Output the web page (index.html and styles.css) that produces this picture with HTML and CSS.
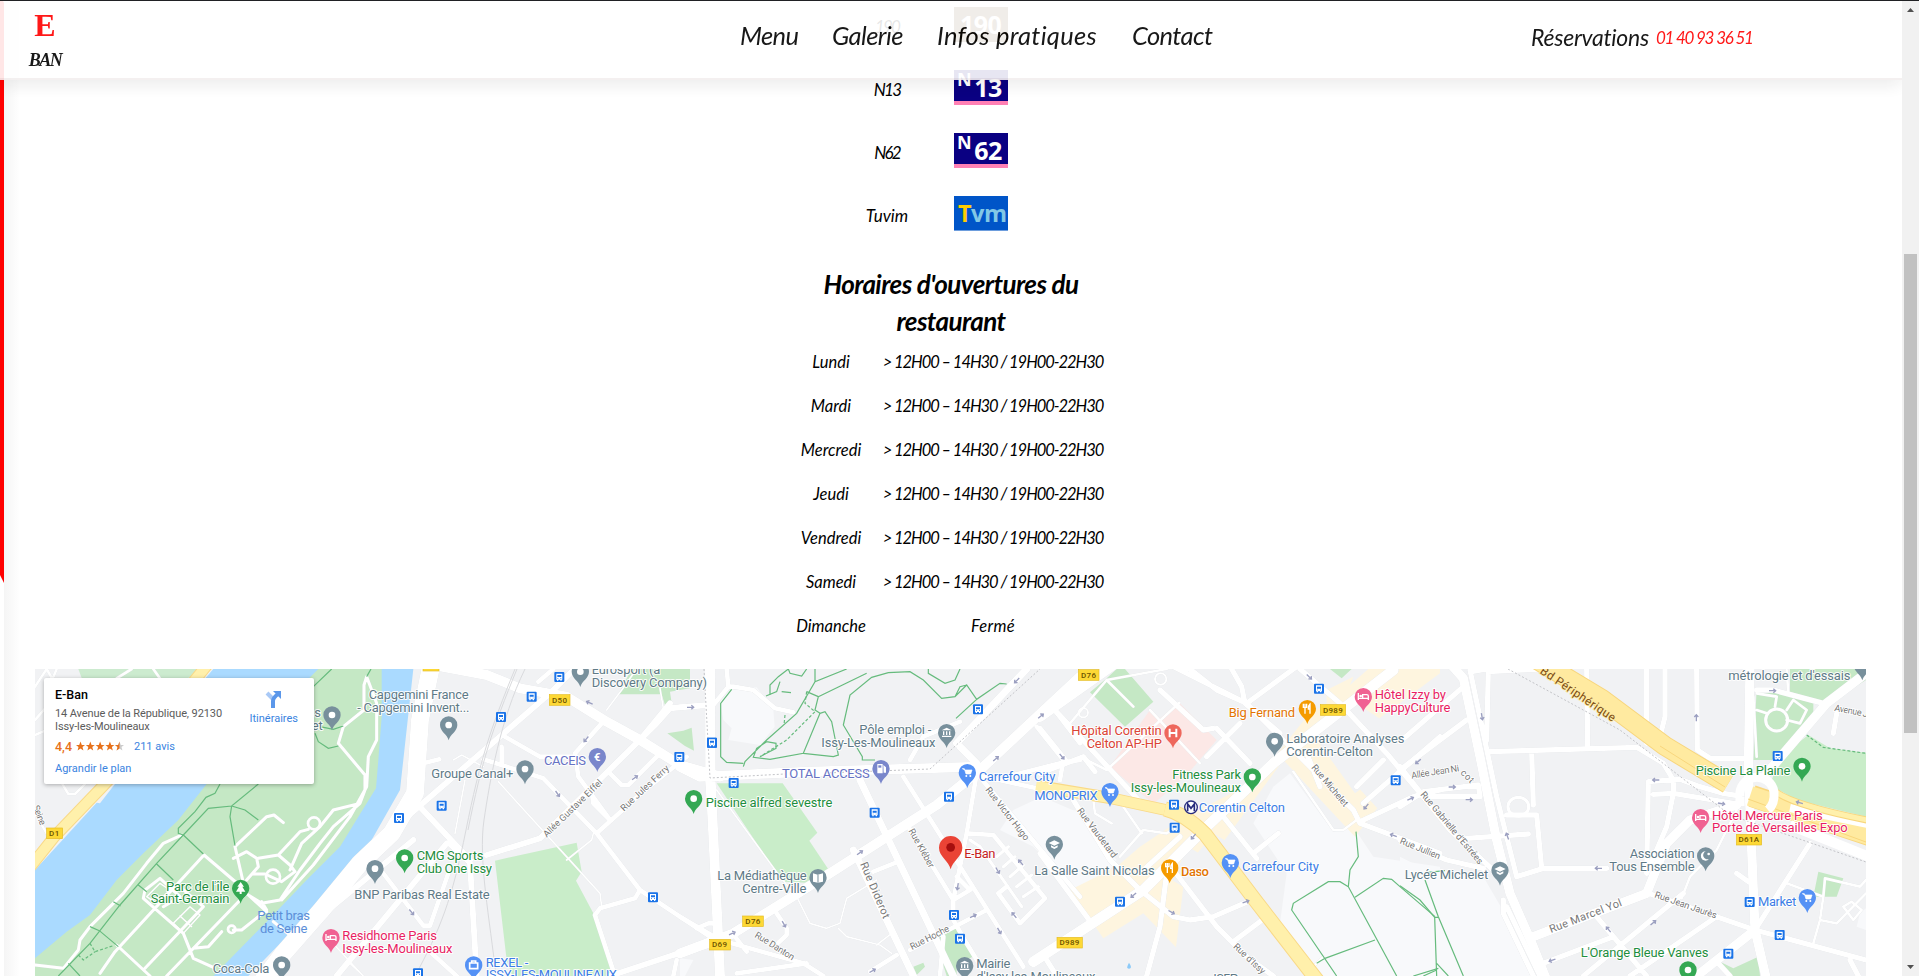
FILE: index.html
```html
<!DOCTYPE html>
<html lang="fr">
<head>
<meta charset="utf-8">
<title>E-Ban - Infos pratiques</title>
<link rel="stylesheet" href="styles.css">
</head>
<body>
<div class="screen">
  <div class="ribbon"></div>
  <main class="content">
    <section class="lines">
      <span>190</span><b class="badge day">190</b>
      <span>N13</span><b class="badge night"><sup>N</sup>13</b>
      <span>N62</span><b class="badge night"><sup>N</sup>62</b>
      <span class="wide">Tuvim</span><b class="badge tvm"><i>T</i>vm</b>
    </section>
    <h2 class="title">Horaires d'ouvertures du<br>restaurant</h2>
    <section class="hours">
      <span>Lundi</span><span>&gt; 12H00 – 14H30 / 19H00-22H30</span>
      <span>Mardi</span><span>&gt; 12H00 – 14H30 / 19H00-22H30</span>
      <span>Mercredi</span><span>&gt; 12H00 – 14H30 / 19H00-22H30</span>
      <span>Jeudi</span><span>&gt; 12H00 – 14H30 / 19H00-22H30</span>
      <span>Vendredi</span><span>&gt; 12H00 – 14H30 / 19H00-22H30</span>
      <span>Samedi</span><span>&gt; 12H00 – 14H30 / 19H00-22H30</span>
      <span>Dimanche</span><span class="closed">Fermé</span>
    </section>
    <section class="map">
      <svg class="plan" viewBox="35 669 1831 307" width="1831" height="307">
        <defs>
          <path id="pin" d="M0 46C-4 28-26 20-26 0A26 26 0 0 1 26 0C26 20 4 28 0 46Z"/>
          <g id="dot"><use href="#pin"/><circle r="10" fill="#fff"/></g>
          <g id="bed"><use href="#pin"/><path d="M-15-11V10M-15 5H15V10M15 5V-2Q15-6 10-6H-2V3" fill="none" stroke="#fff" stroke-width="4"/><circle cx="-8" cy="-2" r="4" fill="#fff"/></g>
          <g id="cart"><use href="#pin"/><path d="M-15-12H-9L-4 4H10L14-8H-7Z" fill="#fff" stroke="#fff" stroke-width="2"/><circle cx="-3" cy="10" r="3" fill="#fff"/><circle cx="9" cy="10" r="3" fill="#fff"/></g>
          <g id="fork"><use href="#pin"/><path d="M-7-15V15M-12-15V-4H-2V-15M8 15V-14Q3-10 3 1H8" fill="none" stroke="#fff" stroke-width="4"/></g>
          <g id="school"><use href="#pin"/><path d="M-17-4L0-12L17-4L0 4ZM-10 3L0 8L10 3V9L0 14L-10 9Z" fill="#fff"/></g>
          <g id="civic"><use href="#pin"/><path d="M-15-7L0-15L15-7ZM-14 9H14V13H-14ZM-11-4H-7V7H-11ZM-2-4H2V7H-2ZM7-4H11V7H7Z" fill="#fff"/></g>
          <g id="bus"><rect x="-15" y="-15" width="30" height="30" rx="3" fill="#1a73e8"/><path d="M-9-10H9V8H7V11H3V8H-3V11H-7V8H-9Z" fill="#fff"/><path d="M-6-6H6V0H-6ZM-6 3H-3V5H-6ZM3 3H6V5H3Z" fill="#1a73e8"/></g>
          <path id="arr" d="M-11 0H8M2-6L9 0L2 6" fill="none" stroke="#9b9fc0" stroke-width="4"/>
        </defs>
        <rect x="35" y="669" width="1831" height="307" fill="#f1f2f4"/>

        <!-- Water, parks and built-up areas -->
        <g transform="translate(0 560) scale(.33333)">
          <path fill="#ccebcf" d="M235 327H600L480 420H270Z"/>
          <path fill="#aadaff" d="M640 327H1240L1200 690L1115 840L1020 960L880 1110L745 1248H105V930L160 870L290 728L300 730L345 672Z"/>
          <path fill="#c5e8c5" d="M955 327H1145V470L1135 600L1128 685L1075 770L1020 860L920 960L800 1085L640 1248H105V1195L200 1115L270 1065L350 960L430 880L535 780L620 672L720 560Z"/>
        </g>
        <g transform="translate(320 660) scale(.33333)">
          <path fill="#c9edc9" d="M525 602L770 548L785 635L768 662L820 760L830 800L872 920L885 948H577L560 900Z"/>
          <path fill="#c5e8c5" d="M935 27H1110V85L1050 95L1055 130L1035 135L1025 103H895ZM1042 220L1090 212L1115 203L1122 272L1095 258Z"/>
        </g>
        <g transform="translate(680 660) scale(.33333)">
          <path fill="#f8f9fb" d="M150 90L230 82L280 150L284 200L240 255L145 240L155 205L130 180L120 125ZM1000 450L1085 410L1200 460V700L1060 560L960 510ZM0 895L40 900L15 948H0Z"/>
          <path fill="#c9edc9" d="M110 370H308L412 518L388 542L445 628L380 668L310 665L290 640Z"/>
          <path fill="#c5e8c5" d="M765 835L825 800L845 820L878 890L830 915L830 948H800ZM700 920L730 908L735 920L710 945Z"/>
        </g>
        <g transform="translate(1040 660) scale(.33333)">
          <path fill="#f8f9fb" d="M700 380L750 340L880 515L940 500L1000 590L1200 620V948H850L720 790L740 640L640 490ZM0 470L110 450L230 600L150 720L0 560Z"/>
          <path fill="#fce8e6" d="M210 320L330 150L360 175L418 128L530 240L440 345L340 432Z"/>
          <path fill="#c5e8c5" d="M200 55L230 27H255L340 125L255 200L150 97ZM870 27H935L905 55Z"/>
          <path fill="#fef5df" d="M930 75L985 27H1200V40L930 240L870 290L1012 445L945 530L730 300L510 600L445 560L395 660L430 680L408 862L310 760L190 835L90 690L230 620L300 560L420 480L650 360L800 170L860 130V90L940 50Z"/>
          <path fill="#f1f2f4" d="M820 225L950 130L1100 230L1040 330L945 400ZM440 620L520 520L650 600L540 620Z"/>
          <path fill="#8ccaf8" d="M267 908q-7 13-5 16q5 5 10 0q3-4-5-16"/>
        </g>
        <g transform="translate(1400 660) scale(.33333)">
          <path fill="#f8f9fb" d="M0 590L60 620L250 650L320 770L400 948H0Z"/>
          <path fill="#c5e8c5" d="M1170 27H1398V60L1280 135L1170 95ZM1070 85L1240 125V170L1130 300H1060Z"/>
          <path fill="#c9edc9" d="M1225 225L1290 265L1398 278V470L1190 420L1110 375L1140 290Z"/>
          <path fill="#c5e8c5" d="M1255 635L1330 655L1310 710H1240ZM960 905L1000 925L1075 890L1080 948H985Z"/>
          <path fill="#f8f9fb" d="M1380 760L1398 745V810L1370 800Z"/>
        </g>

        <!-- Streets -->
        <g class="roads">
          <g transform="translate(0 560) scale(.33333)">
            <path stroke-width="8" d="M105 380L140 327L215 460M105 480L175 400M105 525L140 510M170 327L140 400L260 500M350 355L395 327M460 327L490 370M180 660L205 702H225L255 672M105 760L140 820"/>
            <path stroke-width="9" d="M105 1215L190 1225L235 1170L240 1140L270 1100L370 1000L440 910L490 850L545 825M300 1240L345 1175L612 885L735 990M430 1015L550 1120L580 1195L640 1222M430 1015L435 990L480 955L540 1010L490 1040M705 860L800 770L822 765L850 788M705 860L735 990M580 1165L625 1160L665 1115M350 1155L450 1248M500 1248L740 1000M435 1225L610 1040L545 985M700 895L740 875L770 895L775 920L740 960M775 895L835 885L870 915L885 935L845 965L795 942H760M745 1005L800 1055M745 1005L785 1030L840 1020L900 930L960 850L1000 800L1080 730M835 885L900 815L925 808M1100 350L1092 375V450L1030 500L1015 550L1095 645V690L1080 730L1000 750L960 800L905 850L870 930M1100 350L1130 430V540L1105 590L1100 680L1050 770L940 915L845 1020M700 1110H725L800 1050L785 1025M820 1085L900 1150"/>
            <path stroke-width="8" d="M840 950a21 21 0 1 0-42 0a21 21 0 1 0 42 0M960 790a18 18 0 1 0-36 0a18 18 0 1 0 36 0"/>
            <circle cx="695" cy="1108" r="11" stroke-width="8"/>
            <path stroke-width="4" d="M520 1090L570 1040L600 1065L550 1120ZM540 1068L575 1100M440 1010L480 970L510 990L470 1030Z"/>
          </g>
          <g transform="translate(320 660) scale(.33333)">
            <path stroke-width="54" d="M335 10L300 180L285 400L215 520L120 610L0 755L-110 880L-200 1000"/>
            <path stroke-width="30" d="M340 15L500 45L600 85L740 110L860 185L960 240L1080 315L1200 350"/>
            <path stroke-width="18" d="M1165 0V370L1195 760M250 480L690 100L760 30M285 425L450 600M50 948L380 550M450 610L470 948M500 585L660 535L1010 190L1050 145L1165 135M870 948L1060 885L1200 845M280 540L0 770M960 240L1050 130"/>
            <path stroke-width="14" d="M555 230L660 290H770M845 190L765 280L775 350L870 480M545 310L545 260M490 298L670 355L830 520L960 690L1200 850M870 340L905 375H925L1015 285M815 395L820 430L870 480M830 520L975 390L1100 290M310 310L358 298M190 640L310 797H330L385 640M960 690L945 715L840 745L825 765L885 948M450 610L385 550M335 880L410 948M655 65L700 27M1200 790H1165L1130 805M1060 948L1070 900"/>
            <path stroke-width="5" d="M535 365L840 700L845 740M435 360L405 520M400 300L425 285L490 320M740 600L815 540L820 520M860 150L905 90L950 27M1030 145L1020 85M20 830L130 948M90 910L130 948"/>
          </g>
          <g transform="translate(680 660) scale(.33333)">
            <path stroke-width="30" d="M90 0L92 360L120 948M0 320L60 350L380 335L890 320M0 880L160 820L450 640L770 435L900 330L1200 50"/>
            <path stroke-width="22" d="M890 310L840 260M520 570L700 948M540 360L820 948M830 250L1040 27"/>
            <path stroke-width="14" d="M670 350L1030 920M890 340L860 520L820 720V780L860 850L920 948M890 340L1200 710M685 500L820 720L870 690L830 650M1070 200L1150 300L1140 360M1120 145L1200 250M690 870L920 750M580 635L655 605M290 760L320 805V825L295 848M165 830L200 875M0 770L120 840L370 910L430 948M860 520L940 525L1095 715L1020 790L955 700L980 680M890 345L1070 385L1200 410M0 140L100 135L145 80H160L220 90L285 145L340 157M145 80L140 27M690 300L730 230L840 185M170 940L380 910M570 935L650 885M790 830L780 948M1200 300L1140 310L1000 345"/>
            <path stroke-width="10" d="M870 540L900 560L1025 740M950 590L985 560M970 620L1005 590M990 650L1030 615M1010 680L1055 645M1030 710L1075 680"/>
            <path stroke-width="5" d="M110 390L300 650L350 710L390 790L440 805L480 790L500 715L590 660M475 805L500 830L600 855L635 880M590 855L635 820"/>
          </g>
          <g transform="translate(1040 660) scale(.33333)">
            <path stroke-width="32" d="M0 170L240 0M-20 905L310 690L490 510L700 310L1060 30"/>
            <path stroke-width="16" d="M40 145L300 425M0 205L80 305M0 340L130 290L165 335M400 20L620 130L940 450L960 490L1200 580M575 27L605 80L615 130L720 220M450 27L530 90L620 130M620 130L770 20M780 27L900 130L1040 280L1200 470M960 485L1120 410L1200 390M970 430L1200 230M840 380L800 280M950 380L1030 300M0 580L155 790M100 420L210 600L300 690L400 770L450 780L520 770L635 720M380 640L360 800L320 948M400 630L530 800L620 890L700 948M430 30L530 -20M530 205L630 310M500 290L600 190M550 470L650 595M640 580L715 520M580 845L680 770M520 205L490 210L360 90M420 530L300 640M20 900L50 948"/>
            <path stroke-width="8" d="M90 190L200 60L380 27M200 60L280 140M160 420L165 460L215 490M330 150L480 310M240 590L310 510L380 520L410 500M250 440L305 520M140 300L200 330L418 128M760 335L880 510L910 510L950 480M800 940L850 890"/>
            <circle cx="362" cy="57" r="17" fill="none" stroke-width="6"/><circle cx="130" cy="158" r="14" fill="none" stroke-width="6"/>
          </g>
          <g transform="translate(1400 660) scale(.33333)">
            <path stroke-width="28" d="M150 10L190 55L240 290L290 540L330 700L400 860L440 960M1050 20L1045 330L1065 810L1100 960M1100 340L1280 130L1398 40M1065 810L900 940M400 830L740 700L800 550L870 480L1010 435"/>
            <path stroke-width="16" d="M210 30L290 410L350 650L430 625H620M215 35L300 20M265 30L260 240M265 35L420 27M270 275L710 262L790 310L820 360V400L800 500L740 640L745 365L840 358L900 380L970 400L1020 408M560 20L563 260M740 20V250M795 20V170L780 230M890 20L892 270L930 295H1045M395 275L400 435M320 465H410L425 625M200 535L385 522M0 330L200 180M0 440L70 395L235 375L240 410H70M0 245L190 80M0 320L150 510L290 640M0 540L140 600L250 625M760 403L820 400L1000 430M1065 810L745 700M1065 810L1230 550M1065 810L1398 900M1070 90H1120L1270 130M1010 640L1045 665M1350 900L1375 948M590 770L740 948M430 910L640 830M550 948L850 700M690 948L950 770M950 905L990 948M310 720V760L400 948M320 740L420 948M1300 220L1310 160"/>
            <ellipse cx="355" cy="440" rx="31" ry="28" fill="none" stroke-width="10"/>
            <circle cx="1130" cy="180" r="33" fill="none" stroke-width="9"/>
            <path stroke-width="8" d="M1070 100L1130 110L1125 140M1070 150L1100 160M1160 150L1180 120L1220 150L1200 190L1160 180M1160 30L1165 100M1060 110L1070 290M845 715L870 650L950 570L1010 450M1160 670L1270 710L1275 655L1380 680L1398 660M1270 710L1260 780L1240 850M1260 780L1310 790L1398 700M1330 740L1355 725L1385 750L1360 780Z"/>
          </g>
        </g>

        <!-- Railway and municipal limits -->
        <g fill="none" stroke="#d9dadd" stroke-width="1">
          <path d="M515 669C490 730 480 760 466 830S440 930 415 976M525 669C500 720 490 780 484 820S490 920 496 976M517 669C492 730 482 760 468 830"/>
          <path d="M704 669L710 778L785 774M826 773L930 769L1040 669M1508 669L1620 730L1730 815L1866 862" stroke="#c3c4c8" stroke-dasharray="2 2"/>
        </g>

        <!-- Yellow trunk roads -->
        <g fill="none" stroke-linejoin="round">
          <path stroke="#f9d987" stroke-width="12" d="M27 871L55 836L103 786L150 735L208 664"/>
          <path stroke="#fff0ab" stroke-width="10" d="M27 871L55 836L103 786L150 735L208 664"/>
          <path stroke="#f9d987" stroke-width="12" d="M1038 786L1110 798L1175 812"/>
          <path stroke="#fff0ab" stroke-width="10" d="M1036 786L1110 798L1175 812"/>
          <path stroke="#f9d987" stroke-width="15" d="M1165 809Q1185 814 1205 834L1255 900L1320 984"/>
          <path stroke="#fff0ab" stroke-width="13" d="M1165 809Q1185 814 1205 834L1255 900L1320 984"/>
          <path stroke="#f8d67d" stroke-width="20" d="M1534 658L1602 699L1665 746L1728 784"/>
          <path stroke="#ffeaa0" stroke-width="18" d="M1534 658L1602 699L1665 746L1728 784"/>
          <path stroke="#fff" stroke-width="8" d="M1800 810L1872 836"/>
          <path stroke="#f8d67d" stroke-width="22" d="M1752 796L1872 836"/>
          <path stroke="#ffeaa0" stroke-width="20" d="M1750 796L1872 836"/>
          <path stroke="#fff" stroke-width="8" d="M1790 808L1872 825"/>
          <path stroke="#f8d67d" stroke-width="7" d="M1776 792Q1795 806 1872 821"/>
          <path stroke="#fff0ab" stroke-width="5" d="M1776 792Q1795 806 1872 821"/>
          <path stroke="#fff" stroke-width="10" d="M1790 825L1872 858"/>
          <path stroke="#f8d67d" d="M1660 746L1725 787M1748 799L1866 842"/>
          <path stroke="#fff" stroke-width="9" d="M1740 797A17 17 0 0 1 1774 792Q1775 804 1768 810M1740 797V806"/>
        </g>

        <!-- Footpaths -->
        <g class="paths">
          <g transform="translate(0 560) scale(.33333)"><path d="M660 672L645 700L618 712L585 755L535 805V820L550 825L470 910L360 1035L270 1150L175 1248M550 825L625 745L695 738L775 672M550 825L610 882M695 738L690 770L705 857M695 738L735 750L775 780M470 912L520 960M415 975L440 995M340 1025L362 1038M270 1100L298 1112L355 1160M205 1210L240 1248M940 380L995 327M1113 327L1100 350M945 520L955 545L985 565L1015 558M960 500L1000 508L1030 498"/><path stroke-dasharray="9 6" d="M270 1150L285 1175L340 1157M235 1185L250 1200L285 1175"/></g>
          <g transform="translate(680 660) scale(.33333)"><path d="M155 88L122 130V290L140 307L190 310M190 320L195 305L260 240L350 160L405 65L500 27M270 105V75L295 50L325 27M405 65V27M325 27L330 40L365 48L380 27M258 108L290 95L300 65M415 110L560 40M415 110L380 95M415 110L405 150L420 160L370 280L270 298L220 292L230 265L260 245L288 250V265L240 290M370 280L460 290L475 285L455 185L435 155L420 160M585 300H547V290L490 195L510 105L575 52L625 38L690 35L730 60L785 115L825 110L860 75L890 118L960 70L980 72M745 27V40L795 70L825 60L840 27M860 75L840 80L825 110M890 118L828 175M305 95L333 98"/><path stroke-dasharray="9 6" d="M380 95L375 130L405 155L320 240L240 290M315 165L312 195"/></g>
          <g transform="translate(1040 660) scale(.33333)"><path d="M948 515L955 590L930 630L925 680L1070 948M925 680L900 665H865L760 730L755 750L890 948M945 712L1030 655L1055 658L1080 680L1185 770M830 910L855 895L1005 840M1120 948L1195 925"/></g>
          <g transform="translate(1400 660) scale(.33333)"><path d="M0 677L60 720L104 772L110 948M75 660L115 770L190 948M75 638L135 632M104 772H115M70 948L110 930M110 910L145 948"/><path stroke-dasharray="9 6" d="M1220 225L1270 262L1398 280"/></g>
        </g>

        <!-- One-way arrows -->
        <g>
          <g transform="translate(320 660) scale(.33333)"><use href="#arr" transform="translate(808 128) rotate(205)"/><use href="#arr" x="1112" y="142"/><use href="#arr" transform="translate(798 238) rotate(130)"/><use href="#arr" transform="translate(945 353) rotate(-35)"/><use href="#arr" transform="translate(713 402) rotate(55)"/><use href="#arr" transform="translate(275 757) rotate(50)"/></g>
          <g transform="translate(680 660) scale(.33333)"><use href="#arr" transform="translate(1010 62) rotate(135)"/><use href="#arr" transform="translate(1083 168) rotate(-40)"/><use href="#arr" transform="translate(948 296) rotate(-40)"/><use href="#arr" transform="translate(1146 290) rotate(50)"/><use href="#arr" transform="translate(540 578) rotate(-35)"/><use href="#arr" transform="translate(1022 607) rotate(230)"/><use href="#arr" transform="translate(953 632) rotate(60)"/><use href="#arr" transform="translate(833 680) rotate(100)"/><use href="#arr" transform="translate(880 768) rotate(-25)"/><use href="#arr" transform="translate(1002 765) rotate(230)"/><use href="#arr" transform="translate(958 813) rotate(60)"/><use href="#arr" transform="translate(312 793) rotate(60)"/><use href="#arr" transform="translate(157 820) rotate(-25)"/><use href="#arr" transform="translate(578 932) rotate(-30)"/></g>
          <g transform="translate(1040 660) scale(.33333)"><use href="#arr" transform="translate(808 51) rotate(45)"/><use href="#arr" transform="translate(1134 305) rotate(140)"/><use href="#arr" transform="translate(1112 416) rotate(-25)"/><use href="#arr" transform="translate(978 440) rotate(130)"/><use href="#arr" transform="translate(1060 526) rotate(200)"/><use href="#arr" transform="translate(460 530) rotate(130)"/><use href="#arr" transform="translate(280 706) rotate(140)"/><use href="#arr" transform="translate(395 757) rotate(30)"/><use href="#arr" transform="translate(618 725) rotate(-20)"/></g>
          <g transform="translate(1400 660) scale(.33333)"><use href="#arr" x="1118" y="92"/><use href="#arr" transform="translate(246 170) rotate(80)"/><use href="#arr" transform="translate(889 173) rotate(-90)"/><use href="#arr" transform="translate(767 360) rotate(180)"/><use href="#arr" x="157" y="381"/><use href="#arr" x="208" y="419"/><use href="#arr" transform="translate(965 431) rotate(10)"/><use href="#arr" transform="translate(1198 428) rotate(195)"/><use href="#arr" transform="translate(322 528) rotate(-110)"/><use href="#arr" transform="translate(595 625) rotate(180)"/><use href="#arr" transform="translate(760 788) rotate(-40)"/><use href="#arr" transform="translate(625 808) rotate(230)"/><use href="#arr" transform="translate(456 901) rotate(160)"/></g>
        </g>

        <!-- Street names -->
        <g class="street">
          <g transform="translate(0 560) scale(.33333)"><text transform="translate(98 740) rotate(68)" textLength="62">Seine</text></g>
          <g transform="translate(320 660) scale(.33333)"><text transform="translate(680 533) rotate(-44)" textLength="235">Allée Gustave Eiffel</text><text transform="translate(912 455) rotate(-43)" textLength="188">Rue Jules Ferry</text></g>
          <g transform="translate(680 660) scale(.33333)"><text transform="translate(915 390) rotate(52)" textLength="195">Rue Victor Hugo</text><text transform="translate(685 512) rotate(61)" textLength="130">Rue Kléber</text><text class="lg" transform="translate(540 612) rotate(67)" textLength="180">Rue Diderot</text><text transform="translate(222 830) rotate(32)" textLength="135">Rue Danton</text><text transform="translate(696 870) rotate(-27)" textLength="128">Rue Hoche</text></g>
          <g transform="translate(1040 660) scale(.33333)"><text transform="translate(110 452) rotate(53)" textLength="180">Rue Vaudetard</text><text transform="translate(813 323) rotate(50)" textLength="155">Rue Michelet</text><text transform="translate(578 862) rotate(43)" textLength="120">Rue d'Issy</text></g>
          <g transform="translate(1400 660) scale(.33333)"><text transform="translate(35 356) rotate(-9)" textLength="145">Allée Jean Ni</text><text transform="translate(180 340) rotate(45)" textLength="44">cot</text><text transform="translate(60 404) rotate(50)" textLength="275">Rue Gabrielle d'Estrées</text><text transform="translate(-2 550) rotate(22)" textLength="128">Rue Jullien</text><text class="lg" transform="translate(453 819) rotate(-21)" textLength="230">Rue Marcel Yol</text><text transform="translate(762 712) rotate(19)" textLength="195">Rue Jean Jaurès</text><text transform="translate(1302 152) rotate(11)" textLength="102">Avenue J</text><text class="ring" transform="translate(418 38) rotate(34)" textLength="264">Bd Périphérique</text></g>
        </g>

        <!-- Road numbers -->
        <g class="shields">
          <g transform="translate(0 560) scale(.33333)"><rect x="140" y="804" width="48" height="32"/><text x="163" y="828">D1</text></g>
          <g transform="translate(320 660) scale(.33333)"><rect x="309" y="1" width="48" height="32"/><rect x="688" y="104" width="62" height="32"/><text x="719" y="128">D50</text></g>
          <g transform="translate(680 660) scale(.33333)"><rect x="188" y="768" width="62" height="32"/><text x="219" y="792">D76</text><rect x="89" y="838" width="62" height="32"/><text x="119" y="862">D69</text></g>
          <g transform="translate(1040 660) scale(.33333)"><rect x="115" y="29" width="62" height="32"/><text x="146" y="53">D76</text><rect x="841" y="134" width="76" height="32"/><text x="879" y="158">D989</text><rect x="51" y="832" width="76" height="32"/><text x="89" y="856">D989</text></g>
          <g transform="translate(1400 660) scale(.33333)"><rect x="1009" y="523" width="76" height="32"/><text x="1047" y="547">D61A</text></g>
        </g>

        <!-- Places -->
        <g class="places">
          <g transform="translate(0 560) scale(.33333)">
            <g class="water"><text x="772" y="1081" textLength="158">Petit bras</text><text x="780" y="1120" textLength="142">de Seine</text></g>
            <g class="grey"><use href="#dot" x="996" y="465"/><use href="#dot" x="1125" y="926"/><use href="#dot" x="845" y="1215"/><text x="943" y="472">s</text><text x="935" y="511">et</text><text x="638" y="1240" textLength="170">Coca-Cola</text></g>
            <g class="green"><text x="498" y="992" textLength="190">Parc de l'île</text><text x="452" y="1030" textLength="236">Saint-Germain</text><use href="#pin" x="722" y="985"/></g>
            <path fill="#fff" d="M722 966L732 980H727L736 995H725V1002H719V995H708L717 980H712Z"/>
          </g>
          <g transform="translate(320 660) scale(.33333)">
            <g class="grey"><text x="146" y="117" textLength="300">Capgemini France</text><text x="112" y="156" textLength="336">- Capgemini Invent...</text><use href="#dot" x="386" y="195"/><text x="334" y="353" textLength="246">Groupe Canal+</text><use href="#dot" x="615" y="327"/><text x="103" y="717" textLength="406">BNP Paribas Real Estate</text><text x="815" y="42" textLength="206">Eurosport (a</text><text x="815" y="80" textLength="346">Discovery Company)</text><use href="#dot" x="781" y="35"/></g>
            <g class="violet"><text x="672" y="315" textLength="126">CACEIS</text><use href="#pin" x="832" y="290"/></g><text x="822" y="303" fill="#fff" class="glyph">€</text>
            <g class="green"><use href="#dot" x="254" y="594"/><text x="290" y="600" textLength="200">CMG Sports</text><text x="290" y="639" textLength="226">Club One Issy</text><use href="#dot" x="1121" y="416"/><text x="1157" y="441" textLength="380">Piscine alfred sevestre</text></g>
            <g class="pink"><use href="#bed" x="33" y="833"/><text x="67" y="840" textLength="284">Residhome Paris</text><text x="67" y="878" textLength="330">Issy-les-Moulineaux</text></g>
            <g class="blue"><use href="#pin" x="461" y="915"/><text x="497" y="921" textLength="128">REXEL -</text><text x="497" y="958" textLength="394">ISSY-LES-MOULINEAUX</text></g>
            <path d="M449 909H473V926H449ZM455 909V903H467V909" fill="none" stroke="#fff" stroke-width="5"/>
            <use href="#bus" x="718" y="51"/><use href="#bus" x="635" y="110"/><use href="#bus" x="543" y="171"/><use href="#bus" x="365" y="437"/><use href="#bus" x="237" y="474"/><use href="#bus" x="1176" y="248"/><use href="#bus" x="1078" y="291"/><use href="#bus" x="999" y="712"/><use href="#bus" x="294" y="940"/>
          </g>
          <g transform="translate(680 660) scale(.33333)">
            <g class="grey"><text x="538" y="223" textLength="216">Pôle emploi -</text><text x="424" y="261" textLength="342">Issy-Les-Moulineaux</text><use href="#civic" x="800" y="218"/><text x="112" y="660" textLength="268">La Médiathèque</text><text x="187" y="698" textLength="192">Centre-Ville</text><use href="#pin" x="414" y="653"/><use href="#school" x="1123" y="553"/><text x="1063" y="644" textLength="361">La Salle Saint Nicolas</text><use href="#civic" x="854" y="917"/><text x="889" y="924" textLength="102">Mairie</text><text x="889" y="962" textLength="357">d'Issy-les-Moulineaux</text></g>
            <path fill="#fff" d="M399 640L413 644L429 640V665L414 668L399 665Z"/><path stroke="#78909c" stroke-width="3" d="M414 644V668"/>
            <g class="violet"><text x="306" y="353" textLength="263">TOTAL ACCESS</text><use href="#pin" x="603" y="326"/></g><path fill="#fff" d="M592 312H608V340H592ZM610 315L618 322V338H611Z"/><path fill="#7986cb" d="M595 316H604V323H595Z"/>
            <g class="blue"><use href="#cart" x="862" y="338"/><text x="896" y="363" textLength="230">Carrefour City</text><text x="1063" y="419" textLength="190">MONOPRIX</text></g>
            <path d="M812 628C807 603 777 590 777 563A35 35 0 0 1 847 563C847 590 817 603 812 628Z" fill="#ea4335"/><circle cx="812" cy="562" r="13" fill="#a50e0e"/>
            <text x="853" y="595" fill="#c5221f" textLength="93">E-Ban</text>
            <use href="#bus" x="894" y="148"/><use href="#bus" x="96" y="248"/><use href="#bus" x="161" y="369"/><use href="#bus" x="807" y="410"/><use href="#bus" x="584" y="458"/><use href="#bus" x="822" y="765"/><use href="#bus" x="840" y="836"/>
          </g>
          <g transform="translate(1040 660) scale(.33333)">
            <g class="red"><text x="94" y="225" textLength="271">Hôpital Corentin</text><text x="140" y="264" textLength="226">Celton AP-HP</text><use href="#pin" x="399" y="219"/></g><path d="M389 206V232M409 206V232M389 219H409" stroke="#fff" stroke-width="6"/>
            <g class="orange"><text x="566" y="172" textLength="199">Big Fernand</text><use href="#fork" x="802" y="146"/><use href="#fork" x="389" y="624"/><text x="423" y="648" textLength="84" font-weight="500">Daso</text></g>
            <g class="pink"><use href="#bed" x="970" y="110"/><text x="1004" y="117" textLength="214">Hôtel Izzy by</text><text x="1004" y="156" textLength="227">HappyCulture</text></g>
            <g class="grey"><use href="#dot" x="704" y="244"/><text x="739" y="249" textLength="354">Laboratoire Analyses</text><text x="739" y="288" textLength="260">Corentin-Celton</text><text x="520" y="969" textLength="74">ISEP</text></g>
            <g class="green"><text x="397" y="357" textLength="206">Fitness Park</text><text x="272" y="396" textLength="331">Issy-les-Moulineaux</text><use href="#dot" x="637" y="351"/></g>
            <g class="blue"><use href="#cart" x="210" y="395"/><text x="476" y="457" textLength="259">Corentin Celton</text><use href="#cart" x="571" y="608"/><text x="606" y="633" textLength="231">Carrefour City</text></g>
            <circle cx="453" cy="442" r="19" fill="#fff" stroke="#272b7e" stroke-width="4"/><path d="M443 454V432L453 445L463 432V454" fill="none" stroke="#272b7e" stroke-width="5"/>
            <use href="#bus" x="837" y="86"/><use href="#bus" x="1067" y="361"/><use href="#bus" x="402" y="434"/><use href="#bus" x="404" y="503"/><use href="#bus" x="240" y="725"/>
          </g>
          <g transform="translate(1400 660) scale(.33333)">
            <g class="grey"><text x="985" y="60" textLength="366">métrologie et d'essais</text><use href="#pin" x="1387" y="15"/><text x="14" y="657" textLength="251">Lycée Michelet</text><use href="#school" x="300" y="631"/><text x="689" y="595" textLength="195">Association</text><text x="628" y="633" textLength="256">Tous Ensemble</text><use href="#pin" x="917" y="588"/></g>
            <path d="M927 597A14 14 0 1 1 917 574A10 10 0 1 0 927 597" fill="#fff"/><circle cx="926" cy="582" r="4" fill="#fff"/>
            <g class="green"><text x="887" y="344" textLength="284">Piscine La Plaine</text><use href="#dot" x="1206" y="319"/><text x="542" y="892" textLength="383">L'Orange Bleue Vanves</text><use href="#dot" x="864" y="930"/></g>
            <g class="pink"><use href="#bed" x="902" y="473"/><text x="936" y="480" textLength="332">Hôtel Mercure Paris</text><text x="936" y="517" textLength="407">Porte de Versailles Expo</text></g>
            <g class="blue"><text x="1074" y="738" textLength="115">Market</text><use href="#cart" x="1222" y="713"/></g>
            <use href="#bus" x="1133" y="288"/><use href="#bus" x="1049" y="726"/><use href="#bus" x="1139" y="825"/><use href="#bus" x="985" y="881"/>
          </g>
        </g>
      </svg>
      <article class="card">
        <div class="info">
          <strong>E-Ban</strong>
          <p>14 Avenue de la République, 92130<br>Issy-les-Moulineaux</p>
          <div class="rating"><b>4,4</b>
            <svg width="48" height="11" viewBox="0 0 48 11">
              <defs><path id="star" d="M4.5 .5L5.8 4H9L6.5 6L7.4 9.6L4.5 7.5L1.6 9.6L2.5 6L0 4H3.2Z"/></defs>
              <g fill="#e7711b"><use href="#star"/><use href="#star" x="9.8"/><use href="#star" x="19.6"/><use href="#star" x="29.4"/></g>
              <use href="#star" x="39" fill="#ccc"/><path fill="#e7711b" d="M43.5 .5V7.5L40.6 9.6L41.5 6L39 4H42.2Z"/>
            </svg>
            <a>211 avis</a></div>
          <a>Agrandir le plan</a>
        </div>
        <div class="route">
          <svg width="17" height="18" viewBox="0 0 17 18"><path d="M2 3L8 9" stroke="#a9c9f6" stroke-width="4"/><path d="M8 18V11Q8 8 13 4" fill="none" stroke="#5b97ea" stroke-width="4"/><path fill="#5b97ea" d="M8 1H16V9Z"/></svg>
          <a>Itinéraires</a>
        </div>
      </article>
    </section>
  </main>
  <aside class="scrollbar">
    <svg width="7" height="4"><path d="M0 4L3.5 0L7 4Z" fill="#505050"/></svg>
    <div class="thumb"></div>
    <svg class="down" width="7" height="4"><path d="M0 0L3.5 4L7 0Z" fill="#505050"/></svg>
  </aside>
  <header class="header">
    <div class="logo"><b>E</b><span>BAN</span></div>
    <nav class="nav"><a>Menu</a><a>Galerie</a><a class="current">Infos pratiques</a><a>Contact</a></nav>
    <div class="booking"><span>Réservations</span><em>01 40 93 36 51</em></div>
  </header>
</div>
</body>
</html>
```

FILE: styles.css
```css
* { box-sizing: border-box; }
body { margin: 0; background: #fff; overflow: hidden; }
.screen {
  position: relative;
  display: grid;
  grid-template-columns: 4px 1898px 17px;
  width: 1922px;
  height: 976px;
  overflow: hidden;
  font-family: Lato, "Liberation Sans", sans-serif;
  font-style: italic;
  color: #000;
}
.ribbon {
  height: 583px;
  background: #f00;
  border-radius: 0 5px 0 0;
  clip-path: polygon(0 0, 100% 0, 100% 100%, 0 575px);
}
.content {
  height: 976px;
  padding: 7px 4px 0 0;
  overflow: hidden;
  background: linear-gradient(90deg, #f5f5f5, #fff 16px);
  display: flex;
  flex-direction: column;
  align-items: center;
}
.lines {
  display: grid;
  grid-template-columns: 60px 128px;
  grid-auto-rows: 63px;
  justify-items: center;
  font-size: 17px;
  line-height: 39px;
  letter-spacing: -1.8px;
}
.lines .wide { letter-spacing: 0; }
.badge {
  display: flex;
  align-items: center;
  width: 54px;
  height: 35px;
  font: 700 25px/35px "Open Sans", sans-serif;
  letter-spacing: 0;
  color: #fff;
}
.day { background: #6e4b1e; padding-left: 6px; letter-spacing: -.5px; }
.night {
  padding: 3px 0 0 3px;
  background: #0a0082;
  border-bottom: 4px solid #ff80b4;
  letter-spacing: -.5px;
}
.night sup { align-self: flex-start; margin: -5px 3px 0 0; font-size: 18px; line-height: 22px; }
.tvm { background: #0055c8; color: #82c8e6; border-bottom: 1px solid #6d9ddd; padding-left: 4px; letter-spacing: -.5px; font-size: 23.5px; }
.tvm i { color: #ffcd00; font-style: normal; }
.title {
  margin: 7px 0 1px;
  font-size: 26px;
  line-height: 37px;
  text-align: center;
  letter-spacing: -.55px;
}
.hours {
  display: grid;
  grid-template-columns: 84px 240px;
  grid-auto-rows: 44px;
  justify-items: center;
  font-size: 16.5px;
  line-height: 43px;
  white-space: nowrap;
}
.hours span:nth-child(even) { letter-spacing: -1.05px; }
.hours .closed:nth-child(even) { letter-spacing: .3px; }

.map { position: relative; width: 1831px; height: 307px; margin: 20px 1px 0 0; font-style: normal; font-family: Roboto, sans-serif; }
.plan { display: block; }
.roads { fill: none; stroke: #fff; stroke-linejoin: round; stroke-linecap: round; filter: drop-shadow(0 0 .7px #d3d6da); }
.paths { fill: none; stroke: #66bb7d; stroke-width: 1; }
.paths g { stroke-width: 3.6px; }
.street text { font-size: 28px; fill: #777; stroke: #fff; stroke-width: 5px; paint-order: stroke; }
.street .lg { font-size: 33px; }
.street .ring { font-size: 35px; fill: #7a4a12; stroke: #ffeaa0; }
.shields rect { fill: #fdd835; stroke: #e5bd27; stroke-width: 2px; }
.shields text { font-size: 24px; font-weight: 500; fill: #6b5200; text-anchor: middle; letter-spacing: 1px; }
.places text { font-size: 39px; stroke: #fff; stroke-width: 6px; stroke-opacity: .9; stroke-linejoin: round; paint-order: stroke; }
.places .glyph { font-size: 34px; font-weight: 700; stroke: none; }
.places .water text { fill: #5c8ed8; stroke: none; }
.grey { fill: #78909c; } .grey text { fill: #5f7a87; }
.green { fill: #34a853; } .green text { fill: #1e8e3e; }
.pink { fill: #f06292; } .pink text { fill: #e91e63; }
.blue { fill: #5491f5; } .blue text { fill: #3c7de6; }
.violet { fill: #7986cb; } .violet text { fill: #6672c4; }
.red { fill: #ee675c; } .red text { fill: #db4437; }
.orange { fill: #f59b00; } .orange text { fill: #e37400; }

.card {
  position: absolute;
  left: 9px;
  top: 9px;
  width: 270px;
  height: 106px;
  padding: 8px 16px 0 11px;
  display: flex;
  justify-content: space-between;
  background: #fff;
  border-radius: 2px;
  box-shadow: 0 1px 4px rgba(0, 0, 0, .3);
  font-size: 11px;
}
.card a { color: #3a84df; }
.info strong { display: block; font-size: 12.5px; line-height: 17px; font-weight: 500; }
.info p { margin: 4px 0 6px; line-height: 13px; color: #5b5b5b; white-space: nowrap; letter-spacing: -.1px; }
.rating { display: flex; align-items: center; height: 14px; margin-bottom: 9px; }
.rating b { width: 21px; font-size: 12.5px; font-weight: 500; color: #e7711b; }
.rating a { margin-left: 10px; }
.route { display: flex; flex-direction: column; align-items: center; padding-top: 4px; gap: 4px; }

.scrollbar { background: #f1f1f1; display: flex; flex-direction: column; align-items: center; padding-top: 8px; }
.thumb { width: 13px; height: 479px; margin-top: 242px; background: #c1c1c1; }
.down { margin-top: 232px; }

.header {
  position: absolute;
  left: 0;
  top: 0;
  width: 1902px;
  height: 80px;
  display: grid;
  grid-template-columns: 740px 791px 1fr;
  background: #fff;
  border-bottom: 2px solid #f3efef;
  box-shadow: 0 4px 18px rgba(0, 0, 0, .1);
  clip-path: inset(0 0 -30px 0);
  opacity: .9;
}
.screen::after { content: ""; position: absolute; left: 0; top: 0; width: 1919px; height: 1px; background: #202124; }
.logo { width: 90px; padding: 10px 0 0; display: flex; flex-direction: column; align-items: center; font-family: "Liberation Serif", serif; font-style: normal; }
.logo b { font-size: 32px; line-height: 30px; color: #f00; }
.logo span { font-size: 18px; line-height: 20px; margin-top: 10px; font-weight: 700; font-style: italic; letter-spacing: -1.5px; }
.nav { display: grid; grid-template-columns: 92px 105px 195px 90px; font-size: 25.5px; line-height: 70px; letter-spacing: -.6px; white-space: nowrap; }
.nav .current { letter-spacing: .3px; }
.booking { display: flex; gap: 7px; font-size: 23px; line-height: 75px; letter-spacing: -.25px; white-space: nowrap; }
.booking em { color: #f00; font-size: 17px; letter-spacing: -1.4px; word-spacing: .6px; }
```
